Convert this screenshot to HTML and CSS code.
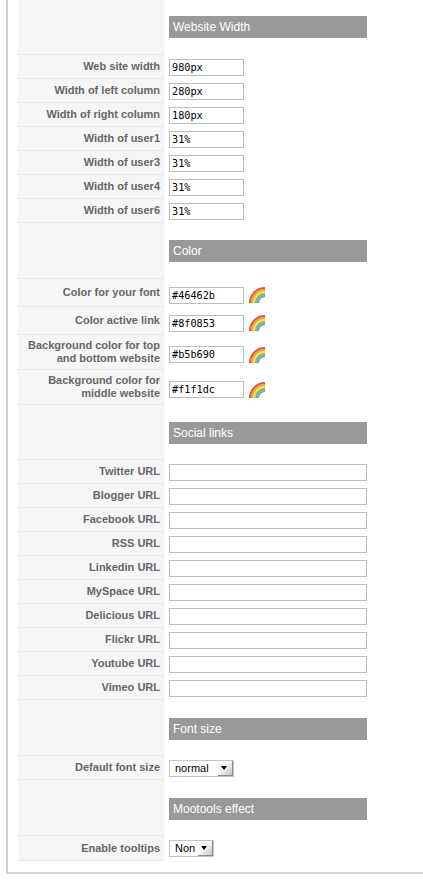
FILE: index.html
```html
<!DOCTYPE html>
<html lang="en">
<head>
<meta charset="utf-8">
<title>Template parameters</title>
<link rel="stylesheet" href="styles.css">
</head>
<body>
<svg class="defs" width="0" height="0" aria-hidden="true">
  <symbol id="rainbow" viewBox="0 0 16 16">
    <g fill="none" stroke-width="2">
      <circle cx="16" cy="16" r="15" stroke="#e2503c"/>
      <circle cx="16" cy="16" r="13" stroke="#f0a030"/>
      <circle cx="16" cy="16" r="11" stroke="#f2e04c"/>
      <circle cx="16" cy="16" r="9" stroke="#72bf4a"/>
      <circle cx="16" cy="16" r="7" stroke="#6f9fd8"/>
    </g>
  </symbol>
</svg>
<main class="panel">
<table class="params">
  <tr class="head first"><td class="label"></td><td class="field"><h3>Website Width</h3></td></tr>
  <tr class="row"><td class="label">Web site width</td><td class="field"><input class="short" value="980px"></td></tr>
  <tr class="row"><td class="label">Width of left column</td><td class="field"><input class="short" value="280px"></td></tr>
  <tr class="row"><td class="label">Width of right column</td><td class="field"><input class="short" value="180px"></td></tr>
  <tr class="row"><td class="label">Width of user1</td><td class="field"><input class="short" value="31%"></td></tr>
  <tr class="row"><td class="label">Width of user3</td><td class="field"><input class="short" value="31%"></td></tr>
  <tr class="row"><td class="label">Width of user4</td><td class="field"><input class="short" value="31%"></td></tr>
  <tr class="row"><td class="label">Width of user6</td><td class="field"><input class="short" value="31%"></td></tr>

  <tr class="head head-color"><td class="label"></td><td class="field"><h3>Color</h3></td></tr>
  <tr class="row color"><td class="label">Color for your font</td><td class="field"><div class="picker"><input class="short" value="#46462b"><svg class="bow"><use href="#rainbow"/></svg></div></td></tr>
  <tr class="row color"><td class="label">Color active link</td><td class="field"><div class="picker"><input class="short" value="#8f0853"><svg class="bow"><use href="#rainbow"/></svg></div></td></tr>
  <tr class="row tall"><td class="label">Background color for top<br>and bottom website</td><td class="field"><div class="picker"><input class="short" value="#b5b690"><svg class="bow"><use href="#rainbow"/></svg></div></td></tr>
  <tr class="row tall"><td class="label">Background color for<br>middle website</td><td class="field"><div class="picker"><input class="short" value="#f1f1dc"><svg class="bow"><use href="#rainbow"/></svg></div></td></tr>

  <tr class="head head-social"><td class="label"></td><td class="field"><h3>Social links</h3></td></tr>
  <tr class="row"><td class="label">Twitter URL</td><td class="field"><input class="long"></td></tr>
  <tr class="row"><td class="label">Blogger URL</td><td class="field"><input class="long"></td></tr>
  <tr class="row"><td class="label">Facebook URL</td><td class="field"><input class="long"></td></tr>
  <tr class="row"><td class="label">RSS URL</td><td class="field"><input class="long"></td></tr>
  <tr class="row"><td class="label">Linkedin URL</td><td class="field"><input class="long"></td></tr>
  <tr class="row"><td class="label">MySpace URL</td><td class="field"><input class="long"></td></tr>
  <tr class="row"><td class="label">Delicious URL</td><td class="field"><input class="long"></td></tr>
  <tr class="row"><td class="label">Flickr URL</td><td class="field"><input class="long"></td></tr>
  <tr class="row"><td class="label">Youtube URL</td><td class="field"><input class="long"></td></tr>
  <tr class="row"><td class="label">Vimeo URL</td><td class="field"><input class="long"></td></tr>

  <tr class="head"><td class="label"></td><td class="field"><h3>Font size</h3></td></tr>
  <tr class="row"><td class="label">Default font size</td><td class="field"><div class="select normal"><select><option>normal</option></select><span class="arrow"></span></div></td></tr>

  <tr class="head"><td class="label"></td><td class="field"><h3>Mootools effect</h3></td></tr>
  <tr class="row last"><td class="label">Enable tooltips</td><td class="field"><div class="select non"><select><option>Non</option></select><span class="arrow"></span></div></td></tr>
</table>
</main>
</body>
</html>
```
FILE: styles.css
```css
html, body {
  margin: 0;
  padding: 0;
  background: #fff;
  overflow: hidden;
}

.defs {
  position: absolute;
}

.panel {
  box-sizing: border-box;
  height: 874px;
  margin-left: 6px;
  padding-left: 10px;
  border-left: 2px solid #cfcfcf;
  border-bottom: 2px solid #d4d4d4;
  font-family: "Liberation Sans", Arial, sans-serif;
}

.params {
  border-collapse: separate;
  border-spacing: 0;
  table-layout: fixed;
  width: 349px;
}

.label {
  box-sizing: border-box;
  width: 147px;
  padding: 0 4px 0 0;
  background: #f6f6f6;
  border-bottom: 1px solid #e8e8e8;
  border-right: 1px solid #fbfbfb;
  color: #666;
  font-size: 11px;
  font-weight: bold;
  line-height: 13px;
  text-align: right;
}

.field {
  padding: 0 0 0 4px;
  vertical-align: middle;
}

.row .label {
  vertical-align: top;
  padding-top: 5px;
}

.row { height: 24px; }
.color { height: 28px; }
.tall { height: 35px; }
.last { height: 25px; }

.color .label { padding-top: 7px; }
.tall .label { padding-top: 4px; }
.last .label { padding-top: 6px; }
.color .field, .tall .field { padding-top: 4px; }

.head { height: 56px; }
.head.first, .head.head-social { height: 55px; }
.head .field { vertical-align: top; padding-top: 18px; }
.head.first .field { padding-top: 16px; }
.head.head-color .field, .head.head-social .field { padding-top: 17px; }

h3 {
  box-sizing: border-box;
  height: 22px;
  margin: 0;
  padding-left: 4px;
  background: #999;
  color: #fff;
  font-size: 12px;
  font-weight: normal;
  line-height: 22px;
}

input {
  display: block;
  box-sizing: border-box;
  height: 17px;
  margin: 0;
  padding: 0 2px;
  background: #fff;
  border: 1px solid #bdbdbd;
  border-radius: 0;
  color: #000;
  font-family: "DejaVu Sans Mono", monospace;
  font-size: 10.2px;
  outline: none;
}

.short { width: 75px; }
.long { width: 198px; }

.picker {
  display: flex;
  align-items: center;
  gap: 5px;
}

.bow {
  width: 16px;
  height: 16px;
}

.select {
  position: relative;
  box-sizing: border-box;
  height: 17px;
  background: #fff;
  border: 1px solid #c4c4c4;
}

.normal { width: 65px; }
.non { width: 45px; }

select {
  display: block;
  width: 100%;
  height: 15px;
  padding: 0 0 0 5px;
  background: transparent;
  border: 0;
  appearance: none;
  color: #000;
  font-family: "Liberation Sans", Arial, sans-serif;
  font-size: 11px;
  line-height: 15px;
  outline: none;
}

.arrow {
  position: absolute;
  top: 0;
  right: 0;
  box-sizing: border-box;
  width: 15px;
  height: 15px;
  background: linear-gradient(135deg, #f8f8f8 45%, #c4c4c4);
  border-right: 1px solid #8c8c8c;
  border-bottom: 1px solid #8c8c8c;
}

.arrow::after {
  content: "";
  position: absolute;
  top: 5px;
  left: 3px;
  border-top: 4px solid #000;
  border-left: 3.5px solid transparent;
  border-right: 3.5px solid transparent;
}
```
